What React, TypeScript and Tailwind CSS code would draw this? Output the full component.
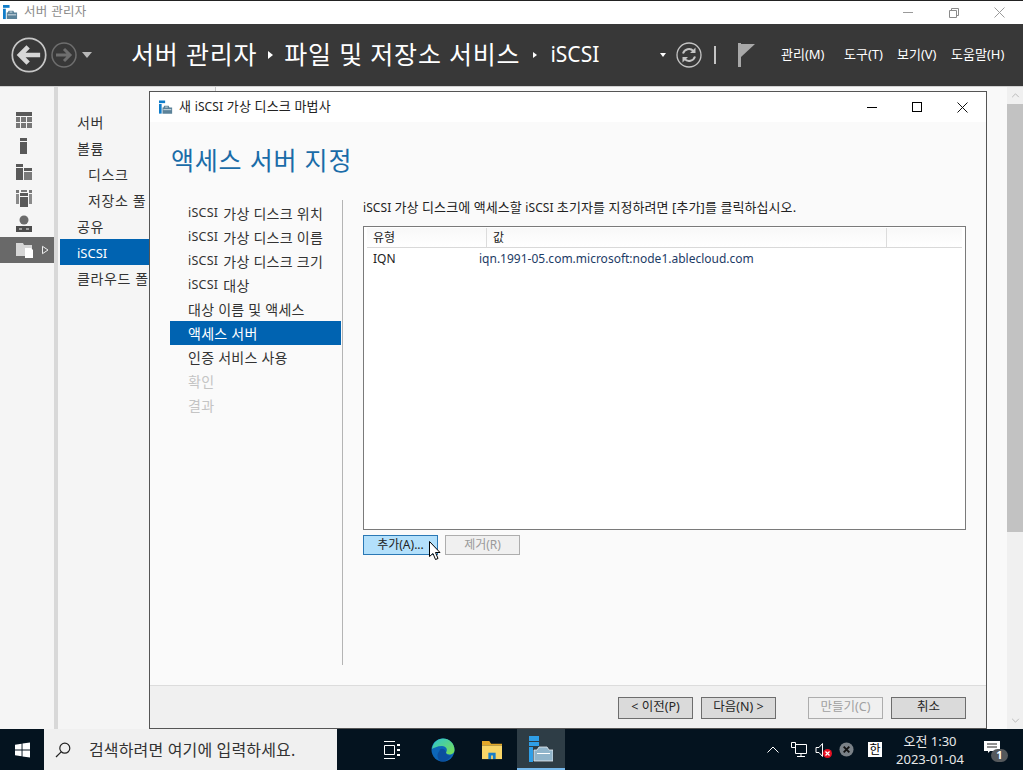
import React from "react";

const font = "font-['Noto_Sans','Noto_Sans_CJK_KR',sans-serif]";

function AppIcon({ className = "" }: { className?: string }) {
  return (
    <svg viewBox="0 0 16 16" className={className}>
      <rect x="0" y="0" width="7" height="3" fill="#0f7cc9" />
      <rect x="0" y="4" width="3" height="11" fill="#0f7cc9" />
      <path d="M4 8h1l1-2h5l1 2h3v7H4z" fill="#5b8299" />
      <rect x="5" y="10" width="9" height="1" fill="#dce6ec" />
      <rect x="7" y="7" width="3" height="1" fill="#dce6ec" />
    </svg>
  );
}

function RailIcon({ kind }: { kind: number }) {
  const c = "#595959";
  return (
    <svg viewBox="0 0 18 18" className="w-[18px] h-[18px]">
      {kind === 0 && (
        <>
          <rect x="1" y="1" width="16" height="4" fill={c} />
          <path d="M1 6h4v5H1zM6 6h5v5H6zM12 6h5v5h-5zM1 12h4v5H1zM6 12h5v5H6zM12 12h5v5h-5z" fill="#777" />
        </>
      )}
      {kind === 1 && (
        <>
          <rect x="5" y="1" width="7" height="3" fill={c} />
          <rect x="5" y="5" width="7" height="12" fill={c} />
        </>
      )}
      {kind === 2 && (
        <>
          <rect x="1" y="1" width="7" height="3" fill={c} />
          <rect x="1" y="5" width="7" height="12" fill={c} />
          <rect x="9" y="5" width="8" height="3" fill={c} />
          <rect x="9" y="9" width="8" height="8" fill="#7a7a7a" />
        </>
      )}
      {kind === 3 && (
        <>
          <path d="M1 1h3v3H1zM14 1h3v3h-3zM6 1h6v2H6z" fill="#777" />
          <path d="M1 5h3v10H1zM14 5h3v10h-3z" fill="#8a8a8a" />
          <rect x="5" y="4" width="8" height="3" fill={c} />
          <rect x="5" y="8" width="8" height="10" fill={c} />
        </>
      )}
      {kind === 4 && (
        <>
          <circle cx="9" cy="5" r="4.5" fill="#6b6b6b" />
          <rect x="1" y="11" width="16" height="6" fill="#4c4c4c" />
          <path d="M4 13.5h3v1H4zM11 13.5h3v1h-3z" fill="#eee" />
        </>
      )}
    </svg>
  );
}

function WizardButton({ label, disabled = false }: { label: string; disabled?: boolean }) {
  return (
    <div
      className={`w-[75px] h-[22px] flex items-center justify-center border text-[12.5px] ${
        disabled ? "border-[#adadad] bg-[#f0f0f0] text-[#a0a0a0]" : "border-[#6d6d6d] bg-[#dadada] text-[#262626]"
      }`}
    >
      {label}
    </div>
  );
}

const steps = [
  "가상 디스크 위치",
  "가상 디스크 이름",
  "가상 디스크 크기",
  "대상",
  "대상 이름 및 액세스",
  "액세스 서버",
  "인증 서비스 사용",
  "확인",
  "결과",
];

function Wizard() {
  return (
    <div className="absolute left-[149px] top-[91px] w-[838px] h-[638px] border border-[#555] bg-[#fafafa] flex flex-col">
      <div className="h-[30px] shrink-0 bg-white flex items-center pl-[9px] text-[13px] text-[#222]">
        <AppIcon className="w-[14px] h-[15px]" />
        <span className="ml-[6px] whitespace-nowrap tracking-[0.15px]">
          새 <span className="text-[12px]">iSCSI</span> 가상 디스크 마법사
        </span>
        <div className="ml-auto flex items-center gap-[35px] pr-[18px]">
          <div className="w-[10px] h-px bg-black" />
          <div className="w-[10px] h-[10px] border border-black" />
          <svg viewBox="0 0 11 11" className="w-[11px] h-[11px]">
            <path d="M0.5 0.5l10 10M10.5 0.5l-10 10" stroke="#111" />
          </svg>
        </div>
      </div>
      <div className="flex-1 min-h-0 flex flex-col">
        <div className="h-[78px] shrink-0 pl-[21px] pt-[20px] text-[25px] leading-[36px] tracking-[0.8px] text-[#1a6ca8] whitespace-nowrap">
          액세스 서버 지정
        </div>
        <div className="flex-1 min-h-0 flex pl-[20px] pb-[20px]">
          <div className="w-[171px] pt-px">
            {steps.map((s, i) => (
              <div
                key={s}
                className={`h-[24px] pl-[18px] flex items-center text-[14px] tracking-[0.25px] whitespace-nowrap ${
                  i === 5 ? "bg-[#0063b1] text-white" : i > 6 ? "text-[#c4c4c4]" : "text-[#333]"
                }`}
              >
                {i < 4 && <span className="text-[12.5px] mr-[5px]">iSCSI</span>}
                {s}
              </div>
            ))}
          </div>
          <div className="w-px bg-[#b4b4b4] ml-px" />
          <div className="ml-[20px] w-[603px] flex flex-col pt-px">
            <div className="h-[25px] flex items-start text-[13px] leading-[13px] tracking-[0.08px] text-[#222] whitespace-pre">
              <span className="text-[12px]">iSCSI </span>가상 디스크에 액세스할 <span className="text-[12px]">iSCSI </span>초기자를 지정하려면 [추가]를 클릭하십시오.
            </div>
            <div className="h-[304px] border border-[#7a7a7a] bg-white px-[3px] pt-[1px] text-[12px] text-[#222]">
              <div className="h-[20px] flex border-b border-[#d9d9d9] bg-gradient-to-b from-[#f8f8f8] to-white">
                <div className="w-[120px] pl-[6px] border-r border-[#dcdcdc] flex items-center">유형</div>
                <div className="w-[400px] pl-[6px] border-r border-[#dcdcdc] flex items-center">값</div>
              </div>
              <div className="flex h-[21px] items-center">
                <div className="w-[112px] pl-[6px]">IQN</div>
                <div className="text-[#1d3c66]">iqn.1991-05.com.microsoft:node1.ablecloud.com</div>
              </div>
            </div>
            <div className="mt-[5px] flex gap-[7px]">
              <div className="w-[75px] h-[20px] flex items-center justify-center bg-[#b3e0fb] border border-[#2a78b5] text-[12px] text-[#222]">
                추가(A)...
              </div>
              <div className="w-[75px] h-[20px] flex items-center justify-center bg-[#f0f0f0] border border-[#adadad] text-[12px] text-[#9a9a9a]">
                제거(R)
              </div>
            </div>
          </div>
        </div>
      </div>
      <div className="h-[43px] shrink-0 border-t border-[#dcdcdc] bg-[#f0f0f0] flex items-center pl-[468px] pt-px">
        <WizardButton label="< 이전(P)" />
        <div className="ml-[8px]">
          <WizardButton label="다음(N) >" />
        </div>
        <div className="ml-[32px]">
          <WizardButton label="만들기(C)" disabled />
        </div>
        <div className="ml-[8px]">
          <WizardButton label="취소" />
        </div>
      </div>
    </div>
  );
}

function TitleBar() {
  return (
    <div className="h-[23px] shrink-0 bg-white flex items-center pl-[3px] text-[12.5px] text-[#8a8a8a]">
      <AppIcon className="w-[15px] h-[15px]" />
      <span className="ml-[6px] tracking-[0.3px]">서버 관리자</span>
      <div className="ml-auto flex items-center">
        <div className="w-[10px] h-px bg-[#9a9a9a] mr-[36px]" />
        <svg viewBox="0 0 10 10" className="w-[10px] h-[10px] mr-[35px]">
          <path d="M0.5 2.5h7v7h-7zM2.5 2.5v-2h7v7h-2" fill="none" stroke="#8a8a8a" />
        </svg>
        <svg viewBox="0 0 11 11" className="w-[11px] h-[11px] mr-[18px]">
          <path d="M0.5 0.5l10 10M10.5 0.5l-10 10" stroke="#9a9a9a" />
        </svg>
      </div>
    </div>
  );
}

function HeaderBar() {
  return (
    <div className="h-[62px] shrink-0 bg-[#383838] flex items-center text-white">
      <svg viewBox="0 0 42 42" className="w-[36px] h-[36px] ml-[11px]">
        <circle cx="21" cy="21" r="19.5" fill="none" stroke="#c6c6c6" strokeWidth="2" />
        <path d="M34 21H11M20 11.5L10.5 21l9.5 9.5" fill="none" stroke="#d6d6d6" strokeWidth="5.5" />
      </svg>
      <svg viewBox="0 0 26 26" className="w-[26px] h-[26px] ml-[4px]">
        <circle cx="13" cy="13" r="12" fill="none" stroke="#6e6e6e" strokeWidth="1.5" />
        <path d="M5 13h14M13 7l6 6-6 6" fill="none" stroke="#6e6e6e" strokeWidth="3" />
      </svg>
      <div className="ml-[5px] w-0 h-0 border-x-[5px] border-x-transparent border-t-[6px] border-t-[#b8b8b8]" />
      <div className="ml-[39px] flex items-center text-[25px] tracking-[0.8px] whitespace-nowrap">
        <span>서버 관리자</span>
        <span className="mx-[11px] w-0 h-0 border-y-[4px] border-y-transparent border-l-[5px] border-l-white" />
        <span>파일 및 저장소 서비스</span>
        <span className="mx-[13px] w-0 h-0 border-y-[3.5px] border-y-transparent border-l-[4px] border-l-white" />
        <span className="text-[21px] tracking-normal">iSCSI</span>
      </div>
      <div className="ml-auto flex items-center">
        <div className="w-0 h-0 border-x-[3.5px] border-x-transparent border-t-[4px] border-t-white" />
        <svg viewBox="0 0 26 26" className="w-[26px] h-[26px] ml-[10px]">
          <circle cx="13" cy="13" r="12" fill="none" stroke="#c4c4c4" strokeWidth="1.3" />
          <path d="M7 11.5a6.2 6.2 0 0 1 10.5-2.4M19 14.5a6.2 6.2 0 0 1-10.5 2.4" fill="none" stroke="#c4c4c4" strokeWidth="2" />
          <path d="M19.5 5.5v5.5h-5.5zM6.5 20.5V15h5.5z" fill="#c4c4c4" />
        </svg>
        <div className="w-[2px] h-[18px] bg-[#c4c4c4] ml-[12px]" />
        <svg viewBox="0 0 18 24" className="w-[18px] h-[24px] ml-[22px]">
          <rect x="0" y="0" width="3" height="24" fill="#a8a8a8" />
          <path d="M3 1h14L3 14z" fill="#a8a8a8" />
        </svg>
        <div className="ml-[25px] w-[63px] text-[13px] whitespace-nowrap">관리(M)</div>
        <div className="w-[53px] text-[13px] whitespace-nowrap">도구(T)</div>
        <div className="w-[54px] text-[13px] whitespace-nowrap">보기(V)</div>
        <div className="w-[72px] text-[13px] whitespace-nowrap">도움말(H)</div>
      </div>
    </div>
  );
}

const navItems = [
  { label: "서버", sub: false },
  { label: "볼륨", sub: false },
  { label: "디스크", sub: true },
  { label: "저장소 풀", sub: true },
  { label: "공유", sub: false },
  { label: "iSCSI", sub: false, active: true },
  { label: "클라우드 폴더", sub: false },
];

function Sidebar() {
  return (
    <>
      <div className="w-[54px] shrink-0 bg-[#f5f5f5] pt-[20px] flex flex-col">
        {[0, 1, 2, 3, 4].map((k) => (
          <div key={k} className="h-[26px] flex items-center justify-center pr-[6px]">
            <RailIcon kind={k} />
          </div>
        ))}
        <div className="h-[26px] bg-[#696969] flex items-center pl-[16px]">
          <svg viewBox="0 0 18 18" className="w-[18px] h-[18px]">
            <path d="M0 2h7l1 2h8v11H0z" fill="#d6d6d6" />
            <path d="M9 7h6l2 2v8H9z" fill="#fff" />
          </svg>
          <svg viewBox="0 0 7 9" className="w-[7px] h-[10px] ml-[8px]">
            <path d="M0.5 0.8L6 4.5L0.5 8.2z" fill="none" stroke="#eee" />
          </svg>
        </div>
      </div>
      <div className="w-[4px] shrink-0 bg-[#d8d8d8]" />
      <div className="w-[158px] shrink-0 bg-[#f5f5f5] border-r border-[#c8c8c8] pl-[2px] pt-[22px] overflow-hidden">
        {navItems.map((n) => (
          <div
            key={n.label}
            className={`h-[26px] flex items-center text-[14px] tracking-[0.6px] whitespace-nowrap ${n.sub ? "pl-[28px]" : "pl-[17px]"} ${
              n.active ? "bg-[#0063b1] text-white pt-[4px]" : "text-[#333]"
            }`}
          >
            {n.active ? <span className="text-[13px] tracking-normal">{n.label}</span> : n.label}
          </div>
        ))}
      </div>
    </>
  );
}

function Scrollbar() {
  return (
    <div className="w-[16px] shrink-0 bg-[#f0f0f0] flex flex-col items-center">
      <svg viewBox="0 0 10 6" className="w-[9px] h-[5px] mt-[6px]">
        <path d="M1 5l4-4 4 4" fill="none" stroke="#b0b0b0" />
      </svg>
      <div className="w-full h-[428px] bg-[#c2c2c2] mt-[6px]" />
      <svg viewBox="0 0 10 6" className="w-[9px] h-[5px] mt-auto mb-[6px]">
        <path d="M1 1l4 4 4-4" fill="none" stroke="#b0b0b0" />
      </svg>
    </div>
  );
}

function Taskbar() {
  return (
    <div className="h-[41px] shrink-0 bg-[#04131f] flex items-center text-white">
      <div className="w-[44px] h-full flex items-center justify-center">
        <svg viewBox="0 0 16 16" className="w-[15px] h-[16px]">
          <path d="M0 2.3L7 1.3V7.5H0zM8 1.1L16 0V7.5H8zM0 8.5H7V14.7L0 13.7zM8 8.5H16V16L8 14.9z" fill="#fff" />
        </svg>
      </div>
      <div className="w-[293px] h-full bg-[#f0f0f0] flex items-center pl-[11px] text-[#333] text-[16px]">
        <svg viewBox="0 0 16 16" className="w-[16px] h-[16px]">
          <circle cx="9.8" cy="6.2" r="5" fill="none" stroke="#222" strokeWidth="1.2" />
          <path d="M6.2 9.8L1 15" stroke="#222" strokeWidth="1.2" />
        </svg>
        <span className="ml-[18px] tracking-[0.15px] whitespace-nowrap">검색하려면 여기에 입력하세요.</span>
      </div>
      <svg viewBox="0 0 16 18" className="w-[16px] h-[18px] ml-[47px]">
        <path d="M0 0.5h11M0 17.5h11M0.5 4.5h10v9h-10z" fill="none" stroke="#fff" />
        <path d="M13 3h3v2h-3zM13 8h3v2h-3zM13 13h3v2h-3z" fill="#fff" />
      </svg>
      <svg viewBox="0 0 24 24" className="w-[24px] h-[24px] ml-[31px]">
        <defs>
          <linearGradient id="edgeA" x1="0" y1="0" x2="1" y2="1">
            <stop offset="0" stopColor="#2bc3d2" />
            <stop offset="1" stopColor="#7ce04e" />
          </linearGradient>
        </defs>
        <circle cx="12" cy="12" r="11.5" fill="#0c66b8" />
        <path d="M1 11C2 4 7 0.5 12 0.5 18 0.5 23.5 5 23.5 12c0 3-2.5 4.5-5 4.5-2 0-3.5-0.8-3.5-2 2-2.5 0.5-6.5-4-6.5C6 8 3 10 1 11z" fill="url(#edgeA)" />
        <path d="M8.5 13c0-3 5-3.5 6.5 1-0.5 3 3 4 5.5 3-2 4-5.5 6.5-9 6.5-3 0-5-3-5-6 0-2 1-3.5 2-4.5z" fill="#0b4f9e" />
      </svg>
      <svg viewBox="0 0 24 22" className="w-[22px] h-[20px] ml-[26px]">
        <path d="M1 1h8l2 3h12v2H1z" fill="#e3a82a" />
        <rect x="1" y="6" width="22" height="15" fill="#f9d667" />
        <rect x="8" y="14" width="8" height="7" fill="#1b7fc9" />
        <rect x="11" y="17" width="2" height="4" fill="#f9d667" />
      </svg>
      <div className="w-[48px] h-full ml-[14px] bg-[#2e3d46] border-b-[2px] border-[#76b9ed] flex items-center justify-center">
        <svg viewBox="0 0 24 26" className="w-[24px] h-[26px]">
          <rect x="0" y="0" width="10" height="5" fill="#2f9fe8" />
          <rect x="0" y="6" width="10" height="4" fill="#2f9fe8" />
          <rect x="0" y="11" width="4" height="15" fill="#2f9fe8" />
          <path d="M5 14h3l2-3h8l2 3h4v11H5z" fill="#90b4ca" stroke="#e8eef2" strokeWidth="0.8" />
          <rect x="8" y="17" width="13" height="1" fill="#fff" />
        </svg>
      </div>
      <svg viewBox="0 0 12 7" className="w-[12px] h-[7px] ml-[202px]">
        <path d="M0.5 6.5L6 1l5.5 5.5" fill="none" stroke="#fff" />
      </svg>
      <svg viewBox="0 0 16 16" className="w-[16px] h-[16px] ml-[12px]">
        <path d="M4.5 2.5h11v9h-11zM10 11.5v3M6 14.5h8M0.5 0.5h4v5h-4z" fill="none" stroke="#fff" />
      </svg>
      <div className="relative w-[16px] h-[16px] ml-[8px]">
        <svg viewBox="0 0 16 16" className="w-[16px] h-[16px]">
          <path d="M1 5.5h3L7.5 1.5v13L4 10.5H1z" fill="none" stroke="#fff" />
        </svg>
        <svg viewBox="0 0 9 9" className="absolute right-[-1px] bottom-0 w-[9px] h-[9px]">
          <circle cx="4.5" cy="4.5" r="4.5" fill="#e81123" />
          <path d="M2.5 2.5l4 4M6.5 2.5l-4 4" stroke="#fff" strokeWidth="1.2" />
        </svg>
      </div>
      <svg viewBox="0 0 16 16" className="w-[15px] h-[15px] ml-[8px]">
        <circle cx="8" cy="8" r="7.5" fill="#7a8187" />
        <path d="M5 5l6 6M11 5l-6 6" stroke="#111" strokeWidth="2" />
      </svg>
      <div className="ml-[14px] w-[14px] h-[15px] bg-white text-black text-[12px] leading-[15px] flex items-center justify-center">한</div>
      <div className="w-[90px] ml-[3px] text-center text-[13px] leading-[18px] text-[#e8e8e8]">
        <div>오전 1:30</div>
        <div>2023-01-04</div>
      </div>
      <div className="relative ml-[9px] w-[16px] h-[12px] mb-[6px]">
        <svg viewBox="0 0 16 12" className="w-[16px] h-[12px]">
          <path d="M0 0h16v10H6l-2 2v-2H0z" fill="#fff" />
          <path d="M3 3h10M3 6h10" stroke="#222" />
        </svg>
        <div className="absolute left-[7px] top-[8px] w-[17px] h-[13px] rounded-full bg-[#55595c] text-white text-[11px] font-bold flex items-center justify-center">1</div>
      </div>
    </div>
  );
}

export default function App() {
  return (
    <div className={`relative w-[1023px] h-[770px] overflow-hidden bg-white flex flex-col ${font}`}>
      <div className="h-px shrink-0 bg-[#222]" />
      <TitleBar />
      <HeaderBar />
      <div className="h-px shrink-0 bg-[#d0d0d0]" />
      <div className="flex-1 min-h-0 flex bg-[#f9f9f9]">
        <Sidebar />
        <div className="flex-1" />
        <Scrollbar />
      </div>
      <Taskbar />
      <Wizard />
      <svg viewBox="0 0 13 20" className="absolute left-[429px] top-[541px] w-[13px] h-[20px]">
        <path d="M0.5 0.5V15.5L4 12.5 6.5 18.5 9 17.5 6.5 11.5H11z" fill="#fff" stroke="#000" />
      </svg>
    </div>
  );
}
